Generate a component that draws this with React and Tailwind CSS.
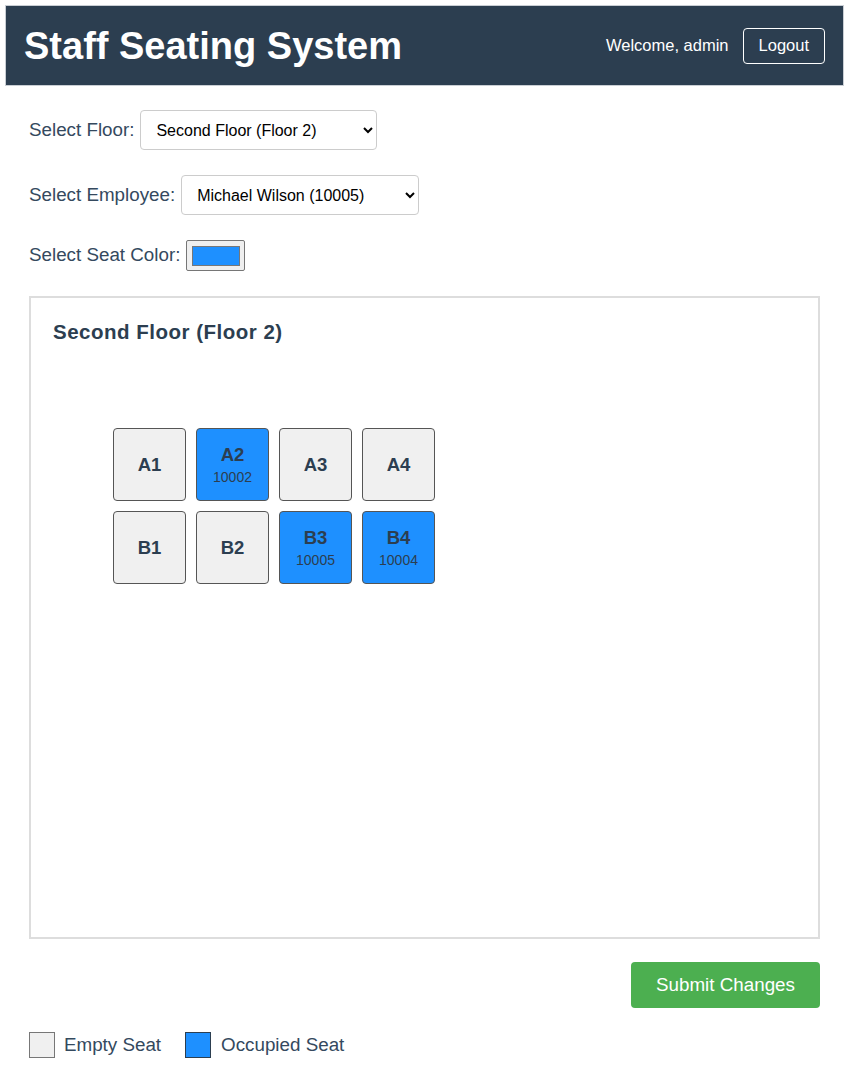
const SEATS = [
  [
    { id: "A1" },
    { id: "A2", emp: "10002" },
    { id: "A3" },
    { id: "A4" },
  ],
  [
    { id: "B1" },
    { id: "B2" },
    { id: "B3", emp: "10005" },
    { id: "B4", emp: "10004" },
  ],
];

const SELECT =
  "h-[40px] rounded-[4px] border border-[#cccccc] bg-white pl-[11px] pr-[6px] text-[16px] text-black outline-none";

function Seat({ seat }) {
  const occupied = Boolean(seat.emp);
  return (
    <div
      className={[
        "flex h-[73px] w-[73px] flex-col items-center justify-center rounded-[4px] border border-[#555]",
        occupied ? "bg-[#1e90ff]" : "bg-[#f0f0f0]",
      ].join(" ")}
    >
      <span className="text-[18.5px] font-bold leading-[22px] text-[#2c3e50]">{seat.id}</span>
      {occupied ? <span className="mt-[3px] text-[14px] leading-[16px] text-[#2c3e50]">{seat.emp}</span> : null}
    </div>
  );
}

export default function App() {
  return (
    <div
      className="min-h-[1068px] bg-white pl-[5px] pr-[4px] pt-[5px] text-[#34495e]"
      style={{ fontFamily: '"Liberation Sans", Arial, sans-serif' }}
    >
      <header className="flex h-[81px] items-center justify-between border border-[#c9ced4] bg-[#2c3e50] pl-[18px] pr-[18px]">
        <h1 className="text-[38px] font-bold leading-none text-white">Staff Seating System</h1>
        <div className="flex items-center gap-[14px]">
          <span className="text-[16.5px] text-white">Welcome, admin</span>
          <button type="button" className="h-[36px] rounded-[4px] border border-white px-[15px] text-[16.5px] text-white">
            Logout
          </button>
        </div>
      </header>

      <div className="px-[24px]">
        <div className="mt-[24px] flex items-center gap-[6px]">
          <span className="text-[18.8px]">Select Floor:</span>
          <select className={`${SELECT} w-[237px]`} defaultValue="2">
            <option value="2">Second Floor (Floor 2)</option>
          </select>
        </div>
        <div className="mt-[25px] flex items-center gap-[6px]">
          <span className="text-[18.8px]">Select Employee:</span>
          <select className={`${SELECT} w-[238px]`} defaultValue="10005">
            <option value="10005">Michael Wilson (10005)</option>
          </select>
        </div>
        <div className="mt-[25px] flex items-center gap-[6px]">
          <span className="text-[18.8px]">Select Seat Color:</span>
          <div className="flex h-[31px] w-[59px] items-center justify-center rounded-[2px] border border-[#767676] bg-[#efefef]">
            <div className="h-[20px] w-[48px] border border-[#777] bg-[#1e90ff]" />
          </div>
        </div>

        <div className="mt-[25px] h-[643px] border-2 border-[#dddddd] px-[22px] pt-[22px]">
          <h2 className="text-[20.5px] font-bold leading-[24px] tracking-[0.5px] text-[#2c3e50]">Second Floor (Floor 2)</h2>
          <div className="ml-[60px] mt-[84px] flex flex-col gap-[10px]">
            {SEATS.map((row, i) => (
              <div key={i} className="flex gap-[10px]">
                {row.map((s) => (
                  <Seat key={s.id} seat={s} />
                ))}
              </div>
            ))}
          </div>
        </div>

        <div className="mt-[23px] flex justify-end">
          <button type="button" className="h-[46px] w-[189px] rounded-[4px] bg-[#4caf50] text-[18.8px] text-white">
            Submit Changes
          </button>
        </div>

        <div className="mt-[23px] flex items-center">
          <div className="h-[26px] w-[26px] border border-[#777] bg-[#f0f0f0]" />
          <span className="ml-[9px] text-[18.8px]">Empty Seat</span>
          <div className="ml-[24px] h-[26px] w-[26px] border border-[#2c3e50] bg-[#1e90ff]" />
          <span className="ml-[10px] text-[18.8px]">Occupied Seat</span>
        </div>
      </div>
    </div>
  );
}
